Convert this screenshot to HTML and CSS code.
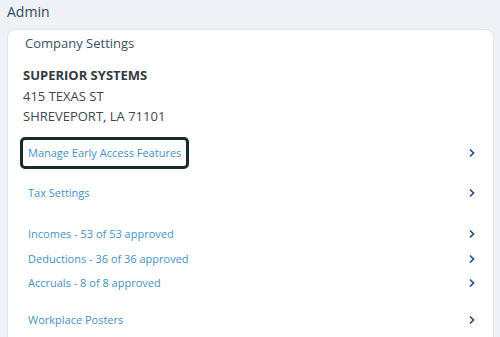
FILE: index.html
```html
<!DOCTYPE html>
<html>
<head>
<meta charset="utf-8">
<link rel="stylesheet" href="styles.css">
</head>
<body>
<div class="page-title">Admin</div>
<div class="card">
  <div class="card-title">Company Settings</div>
  <div class="company">
    <div class="company-name">SUPERIOR SYSTEMS</div>
    <div>415 TEXAS ST</div>
    <div>SHREVEPORT, LA 71101</div>
  </div>
  <div class="group g1">
    <div class="row"><a class="link focused">Manage Early Access Features</a><svg class="chev" viewBox="0 0 8 10"><path d="M2 1.5 L5.5 5 L2 8.5"/></svg></div>
  </div>
  <div class="group g2">
    <div class="row"><a class="link">Tax Settings</a><svg class="chev" viewBox="0 0 8 10"><path d="M2 1.5 L5.5 5 L2 8.5"/></svg></div>
  </div>
  <div class="group g3">
    <div class="row"><a class="link">Incomes - 53 of 53 approved</a><svg class="chev" viewBox="0 0 8 10"><path d="M2 1.5 L5.5 5 L2 8.5"/></svg></div>
    <div class="row"><a class="link">Deductions - 36 of 36 approved</a><svg class="chev" viewBox="0 0 8 10"><path d="M2 1.5 L5.5 5 L2 8.5"/></svg></div>
    <div class="row"><a class="link">Accruals - 8 of 8 approved</a><svg class="chev" viewBox="0 0 8 10"><path d="M2 1.5 L5.5 5 L2 8.5"/></svg></div>
  </div>
  <div class="group g4">
    <div class="row"><a class="link">Workplace Posters</a><svg class="chev" viewBox="0 0 8 10"><path d="M2 1.5 L5.5 5 L2 8.5"/></svg></div>
  </div>
</div>
</body>
</html>
```
FILE: styles.css
```css
html, body {
  margin: 0;
  padding: 0;
  background: #eef2f7;
  font-family: "Open Sans", "Liberation Sans", sans-serif;
  overflow: hidden;
  height: 337px;
}
.page-title {
  font-size: 14px;
  line-height: 20px;
  color: #34495c;
  padding: 2px 0 0 7px;
  height: 27px;
}
.card {
  box-sizing: border-box;
  margin: 0 6px 0 7px;
  background: #fff;
  border: 1px solid #e1e6ed;
  border-bottom: none;
  border-radius: 8px 8px 0 0;
  height: 308px;
  overflow: hidden;
}
.card-title {
  font-size: 13px;
  line-height: 20px;
  color: #3b5063;
  padding: 3px 0 0 17px;
  height: 27px;
}
.company {
  padding: 5px 0 0 15px;
  font-size: 13px;
  line-height: 20.5px;
  color: #3f4650;
}
.company-name {
  font-weight: 700;
  color: #333a42;
}
.group {
  padding-left: 20px;
  padding-right: 20px;
}
.g1 { margin-top: 14px; }
.g2 { margin-top: 16px; }
.g3 { margin-top: 16px; }
.g4 { margin-top: 12px; }
.row {
  display: flex;
  align-items: center;
  justify-content: space-between;
  height: 24.6px;
}
.link {
  display: inline-block;
  font-size: 11px;
  line-height: 16px;
  color: #4592c6;
  padding: 5px;
  margin: -8px;
  border: 3px solid transparent;
  border-radius: 5px;
}
.link.focused {
  border-color: #1a2b2c;
}
.chev {
  width: 8px;
  height: 10px;
  fill: none;
  stroke: #2b4f7e;
  stroke-width: 1.7;
  margin-right: -3px;
}
```
